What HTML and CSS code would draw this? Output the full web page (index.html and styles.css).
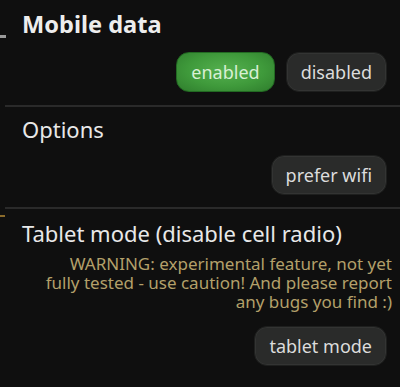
FILE: index.html
```html
<!DOCTYPE html>
<html>
<head>
<meta charset="utf-8">
<link rel="stylesheet" href="styles.css">
</head>
<body>
<div class="screen">
  <span class="mark mark-grey"></span>
  <span class="mark mark-orange"></span>
  <section class="group first">
    <h1 class="title bold">Mobile data</h1>
    <div class="row">
      <button class="btn on">enabled</button>
      <button class="btn">disabled</button>
    </div>
  </section>
  <section class="group second">
    <h2 class="title">Options</h2>
    <div class="row">
      <button class="btn">prefer wifi</button>
    </div>
  </section>
  <section class="group third">
    <h2 class="title">Tablet mode (disable cell radio)</h2>
    <p class="warn">WARNING: experimental feature, not yet<br>fully tested - use caution! And please report<br>any bugs you find :)</p>
    <div class="row">
      <button class="btn">tablet mode</button>
    </div>
  </section>
</div>
</body>
</html>
```
FILE: styles.css
```css
* { box-sizing: border-box; }
html, body { margin: 0; padding: 0; }
body {
  background: #0f0f0f;
  font-family: "Noto Sans", "Open Sans", sans-serif;
  color: #e6e6e6;
}
.screen {
  position: relative;
  width: 400px;
  height: 387px;
  overflow: hidden;
}
.mark { position: absolute; left: 0; height: 3px; width: 6px; }
.mark-grey { top: 35px; background: #9a9a9a; }
.mark-orange { top: 215px; height: 2px; width: 5px; background: #8a6a2a; }
.group {
  display: flex;
  flex-direction: column;
  margin-left: 5px;
  border-bottom: 2px solid #2a2a2a;
}
.third { border-bottom: none; }
.title {
  margin: 0;
  padding-left: 17px;
  font-size: 22px;
  font-weight: normal;
  line-height: 30px;
  color: #e8e8e8;
}
.title.bold { font-weight: bold; font-size: 23.6px; color: #ededed; }
.first { height: 107px; padding-top: 9px; }
.second { height: 102px; padding-top: 7px; }
.third { padding-top: 9px; }
.row {
  display: flex;
  justify-content: flex-end;
  gap: 11px;
  padding-right: 13px;
}
.first .row { margin-top: 13px; }
.second .row { margin-top: 11px; }
.third .row { margin-top: 15px; }
.btn {
  font-family: "Noto Sans", "Open Sans", sans-serif;
  font-size: 18px;
  color: #dcdcdc;
  height: 40px;
  padding: 0 14px;
  border-radius: 13px;
  border: 1px solid #1e1f1e;
  background: #2a2b2a;
  box-shadow: inset 0 0 0 1px #333433;
}
.btn.on {
  background: radial-gradient(ellipse at 50% 45%, #55b04f 0%, #3f9a3b 55%, #2f7d2d 100%);
  border-color: #226a22;
  box-shadow: none;
  color: #d8f0d4;
}
.warn {
  margin: 6px 0 0 0;
  padding-right: 8px;
  text-align: right;
  font-size: 17px;
  line-height: 19px;
  color: #b3a06a;
}
```
